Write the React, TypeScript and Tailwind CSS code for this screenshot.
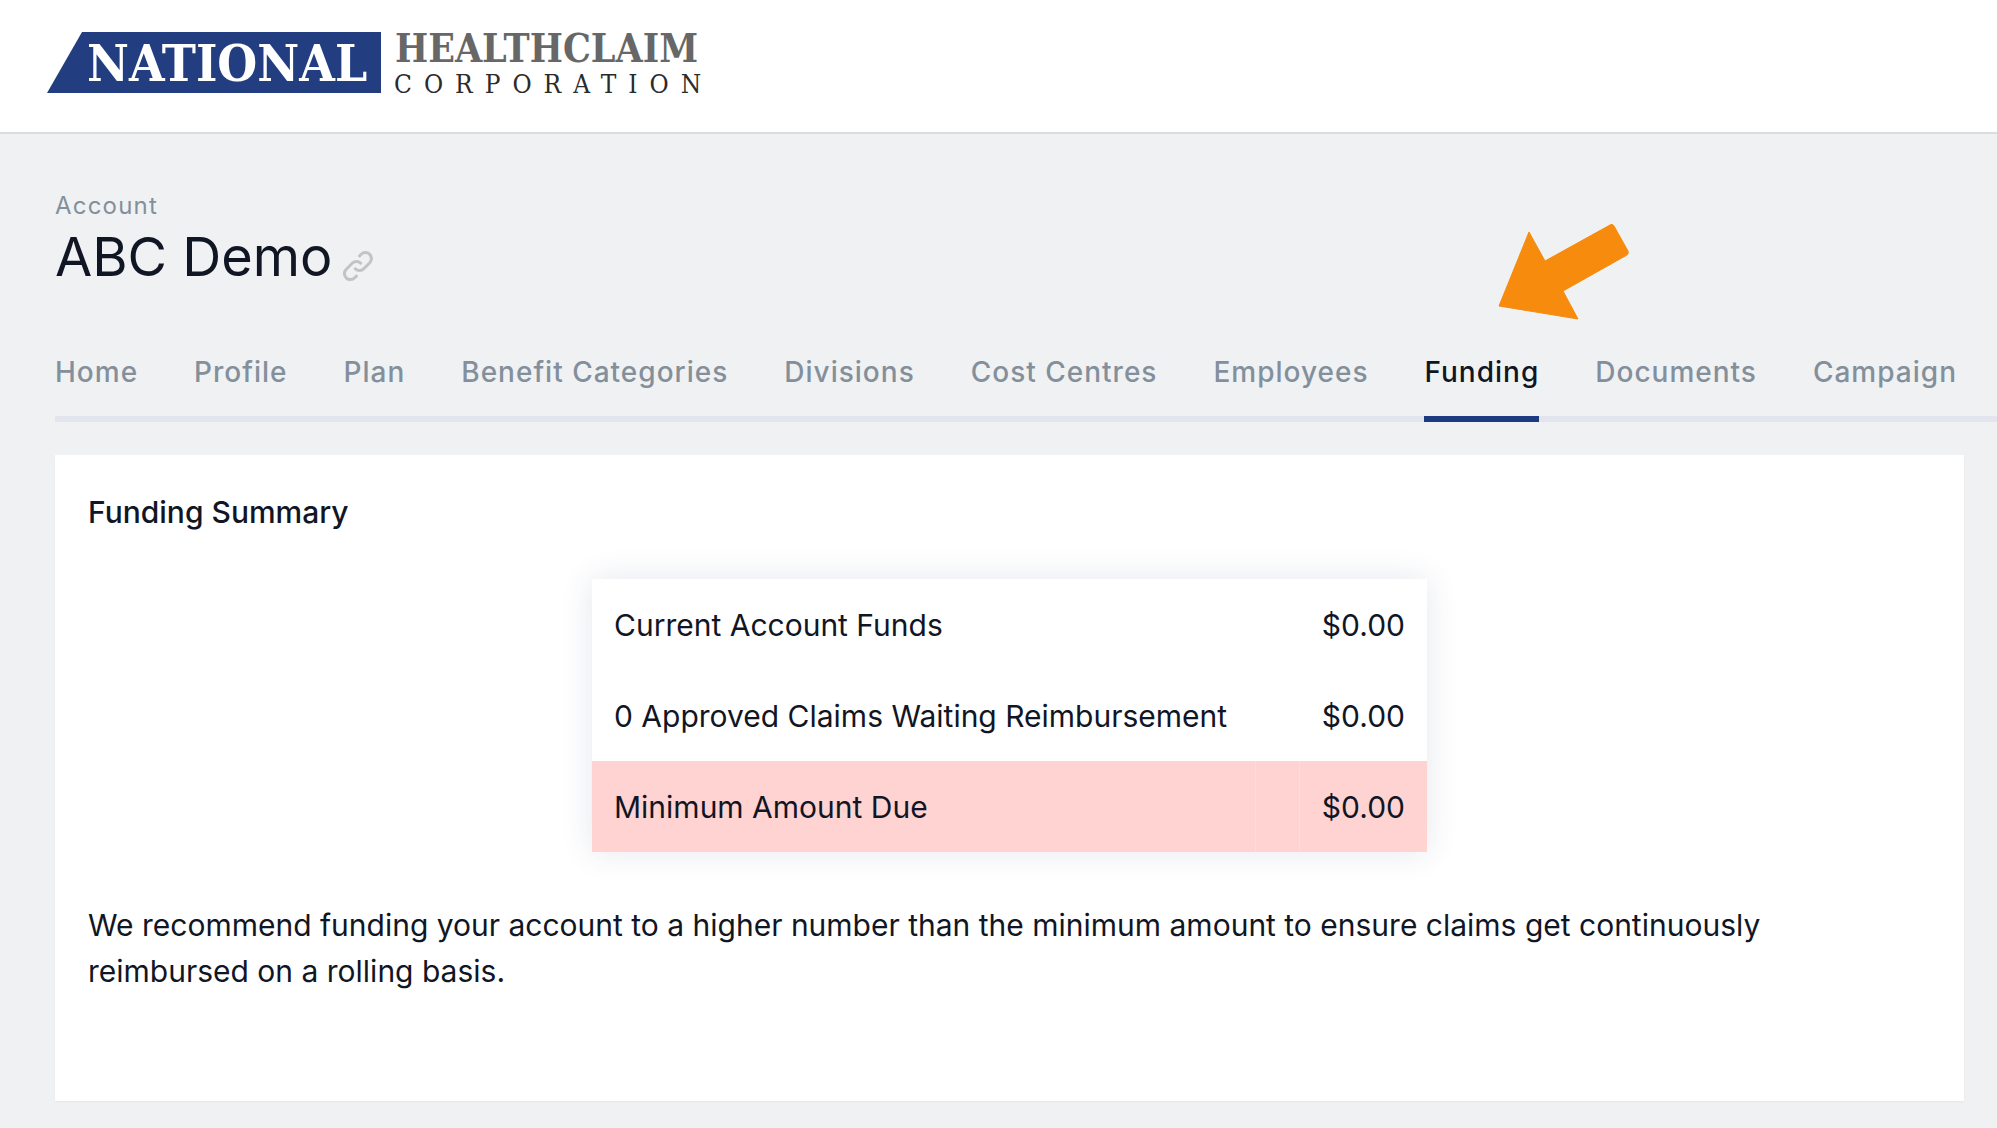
const tabs = [
  'Home',
  'Profile',
  'Plan',
  'Benefit Categories',
  'Divisions',
  'Cost Centres',
  'Employees',
  'Funding',
  'Documents',
  'Campaign',
];

const rows = [
  { label: 'Current Account Funds', amount: '$0.00', due: false },
  { label: '0 Approved Claims Waiting Reimbursement', amount: '$0.00', due: false },
  { label: 'Minimum Amount Due', amount: '$0.00', due: true },
];

function Logo() {
  return (
    <svg width="680" height="92" viewBox="0 -16 680 92" role="img" aria-label="National HealthClaim Corporation">
      <path d="M35 0H334V61H0Z" fill="#233e80" />
      <g fontFamily="'DejaVu Serif Condensed', 'DejaVu Serif', serif">
        <text x="40" y="49" fontSize="51" fontWeight="700" fill="#ffffff">
          NATIONAL
        </text>
        <text x="348" y="30" fontSize="39" fontWeight="700" fill="#666766">
          HEALTHCLAIM
        </text>
        <text x="347" y="61" fontSize="26" letterSpacing="12" fill="#2b2b2b">
          CORPORATION
        </text>
      </g>
    </svg>
  );
}

function LinkIcon() {
  return (
    <svg className="size-9" viewBox="0 0 24 24" fill="none" stroke="#c1c3c5" strokeWidth="2" strokeLinecap="round" strokeLinejoin="round" aria-hidden="true">
      <path d="M13.828 10.172a4 4 0 0 0-5.656 0l-4 4a4 4 0 1 0 5.656 5.656l1.102-1.101m-.758-4.899a4 4 0 0 0 5.656 0l4-4a4 4 0 0 0-5.656-5.656l-1.1 1.1" />
    </svg>
  );
}

function Arrow() {
  return (
    <svg
      className="pointer-events-none absolute bottom-full left-1/2 mb-[34px] ml-4 h-[98px] w-[132px]"
      viewBox="1499 222 132 98"
      fill="#f68b0e"
      stroke="#f68b0e"
      strokeWidth="1"
      strokeLinejoin="round"
      aria-hidden="true"
    >
      <path d="M1500 306L1530 232L1546 261L1611 225Q1613 223 1615 226L1629 251Q1630 253 1628 255L1564 291L1579 319Z" />
    </svg>
  );
}

export default function App() {
  return (
    <div className="min-h-screen overflow-x-hidden bg-[#f0f1f3] font-['Inter',sans-serif] text-[#111624]">
      <header className="border-b-2 border-[#d9dce0] bg-white px-[47px] pt-4 pb-6">
        <Logo />
      </header>

      <main className="pt-[56px] pb-[27px] pl-[55px]">
        <p className="text-2xl leading-8 tracking-wider text-[#83909c]">Account</p>
        <div className="flex items-end gap-2">
          <h1 className="text-[54px] leading-[70px]">ABC Demo</h1>
          <button type="button" aria-label="Copy link" className="mb-2">
            <LinkIcon />
          </button>
        </div>

        <nav className="mt-[62px] flex gap-14 border-b-[6px] border-[#e2e5ed] text-[28px] leading-9 font-medium tracking-[1px] whitespace-nowrap text-[#83909c]">
          {tabs.map((tab) =>
            tab === 'Funding' ? (
              <div key={tab} className="relative">
                <Arrow />
                <a href="#funding" aria-current="page" className="-mb-[6px] block border-b-[6px] border-[#1d3b80] pb-[26px] text-[#111624]">
                  {tab}
                </a>
              </div>
            ) : (
              <a key={tab} href={'#' + tab.toLowerCase().replace(' ', '-')} className="pb-[26px]">
                {tab}
              </a>
            ),
          )}
        </nav>

        <section className="mt-[33px] mr-[33px] bg-white px-[33px] pt-[34px] pb-[107px] text-[30px] leading-[46px] shadow-xs">
          <h2 className="font-medium">Funding Summary</h2>
          <table className="mx-auto mt-11 w-[835px] bg-white shadow-[0_0_30px_rgba(40,60,110,0.12)]">
            <tbody>
              {rows.map((row) => {
                const divider = row.due ? 'border-[#ffdcdb]' : 'border-transparent';
                return (
                  <tr key={row.label} className={row.due ? 'bg-[#ffd3d2]' : ''}>
                    <th scope="row" className="h-[91px] px-[22px] text-left font-normal whitespace-nowrap">
                      {row.label}
                    </th>
                    <td className={'w-11 border-x ' + divider} />
                    <td className="w-32 pr-[22px] text-right">{row.amount}</td>
                  </tr>
                );
              })}
            </tbody>
          </table>
          <p className="mt-[50px] max-w-[1740px]">
            We recommend funding your account to a higher number than the minimum amount to ensure claims get
            continuously reimbursed on a rolling basis.
          </p>
        </section>
      </main>
    </div>
  );
}
